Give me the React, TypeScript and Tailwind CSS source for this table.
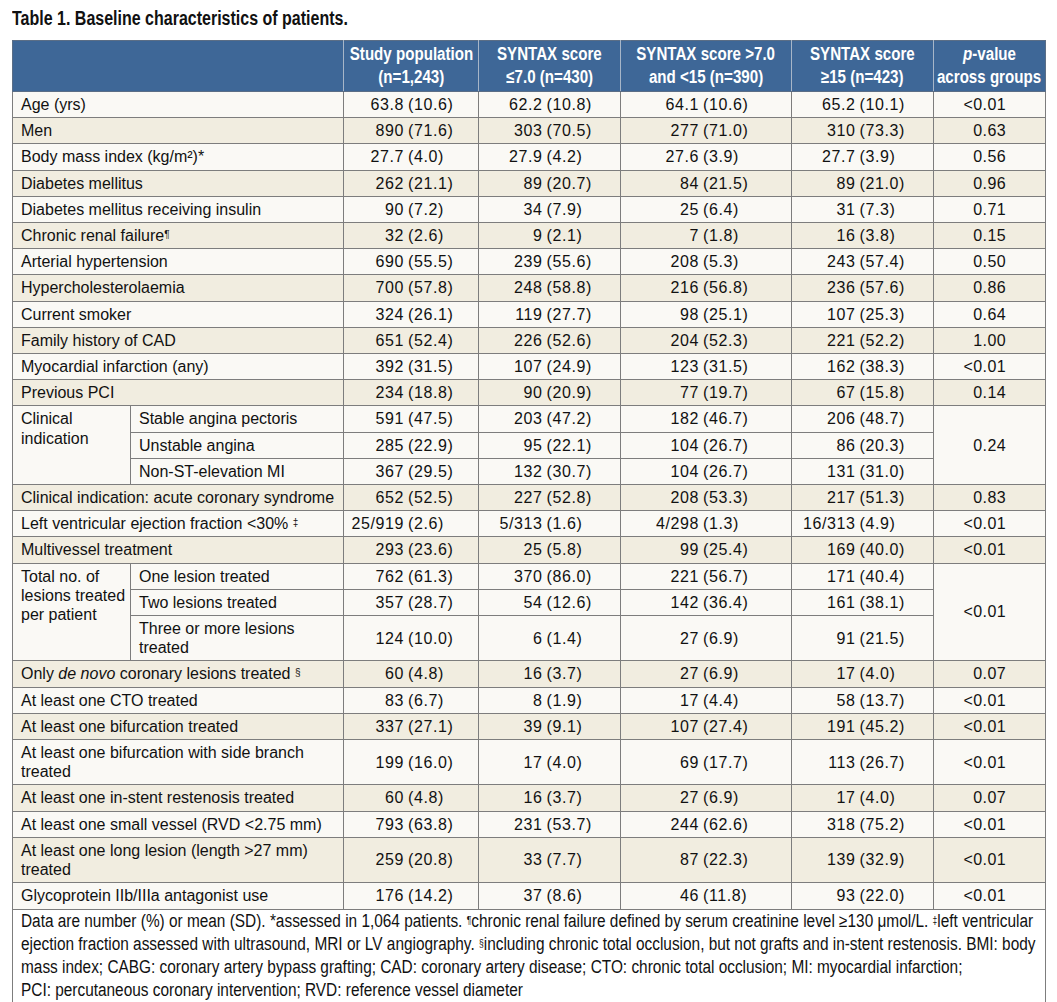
import React from "react";

type Single = {
  kind: "single";
  label: React.ReactNode;
  vals: string[];
  p: string;
  bg: string;
};
type Group = {
  kind: "group";
  label: React.ReactNode;
  subs: { label: React.ReactNode; vals: string[] }[];
  p: string;
  bg: string;
};

const L = "bg-[#faf9f5]";
const B = "bg-[#f1ede0]";

const Sup = ({ children }: { children: React.ReactNode }) => (
  <sup className="text-[10px] relative -top-[3px] align-baseline">{children}</sup>
);

const rows: (Single | Group)[] = [
  { kind: "single", label: "Age (yrs)", vals: ["63.8 (10.6)", "62.2 (10.8)", "64.1 (10.6)", "65.2 (10.1)"], p: "<0.01", bg: L },
  { kind: "single", label: "Men", vals: ["890 (71.6)", "303 (70.5)", "277 (71.0)", "310 (73.3)"], p: "0.63", bg: B },
  { kind: "single", label: <>Body mass index (kg/m²)*</>, vals: ["27.7 (4.0)", "27.9 (4.2)", "27.6 (3.9)", "27.7 (3.9)"], p: "0.56", bg: L },
  { kind: "single", label: "Diabetes mellitus", vals: ["262 (21.1)", "89 (20.7)", "84 (21.5)", "89 (21.0)"], p: "0.96", bg: B },
  { kind: "single", label: "Diabetes mellitus receiving insulin", vals: ["90 (7.2)", "34 (7.9)", "25 (6.4)", "31 (7.3)"], p: "0.71", bg: L },
  { kind: "single", label: <>Chronic renal failure<Sup>¶</Sup></>, vals: ["32 (2.6)", "9 (2.1)", "7 (1.8)", "16 (3.8)"], p: "0.15", bg: B },
  { kind: "single", label: "Arterial hypertension", vals: ["690 (55.5)", "239 (55.6)", "208 (5.3)", "243 (57.4)"], p: "0.50", bg: L },
  { kind: "single", label: "Hypercholesterolaemia", vals: ["700 (57.8)", "248 (58.8)", "216 (56.8)", "236 (57.6)"], p: "0.86", bg: B },
  { kind: "single", label: "Current smoker", vals: ["324 (26.1)", "119 (27.7)", "98 (25.1)", "107 (25.3)"], p: "0.64", bg: L },
  { kind: "single", label: "Family history of CAD", vals: ["651 (52.4)", "226 (52.6)", "204 (52.3)", "221 (52.2)"], p: "1.00", bg: B },
  { kind: "single", label: "Myocardial infarction (any)", vals: ["392 (31.5)", "107 (24.9)", "123 (31.5)", "162 (38.3)"], p: "<0.01", bg: L },
  { kind: "single", label: "Previous PCI", vals: ["234 (18.8)", "90 (20.9)", "77 (19.7)", "67 (15.8)"], p: "0.14", bg: B },
  {
    kind: "group",
    label: <>Clinical<br />indication</>,
    subs: [
      { label: "Stable angina pectoris", vals: ["591 (47.5)", "203 (47.2)", "182 (46.7)", "206 (48.7)"] },
      { label: "Unstable angina", vals: ["285 (22.9)", "95 (22.1)", "104 (26.7)", "86 (20.3)"] },
      { label: "Non-ST-elevation MI", vals: ["367 (29.5)", "132 (30.7)", "104 (26.7)", "131 (31.0)"] },
    ],
    p: "0.24",
    bg: L,
  },
  { kind: "single", label: "Clinical indication: acute coronary syndrome", vals: ["652 (52.5)", "227 (52.8)", "208 (53.3)", "217 (51.3)"], p: "0.83", bg: B },
  { kind: "single", label: <>Left ventricular ejection fraction &lt;30% <Sup>‡</Sup></>, vals: ["25/919 (2.6)", "5/313 (1.6)", "4/298 (1.3)", "16/313 (4.9)"], p: "<0.01", bg: L },
  { kind: "single", label: "Multivessel treatment", vals: ["293 (23.6)", "25 (5.8)", "99 (25.4)", "169 (40.0)"], p: "<0.01", bg: B },
  {
    kind: "group",
    label: <>Total no. of<br />lesions treated<br />per patient</>,
    subs: [
      { label: "One lesion treated", vals: ["762 (61.3)", "370 (86.0)", "221 (56.7)", "171 (40.4)"] },
      { label: "Two lesions treated", vals: ["357 (28.7)", "54 (12.6)", "142 (36.4)", "161 (38.1)"] },
      { label: <>Three or more lesions<br />treated</>, vals: ["124 (10.0)", "6 (1.4)", "27 (6.9)", "91 (21.5)"] },
    ],
    p: "<0.01",
    bg: L,
  },
  { kind: "single", label: <>Only <i>de novo</i> coronary lesions treated <Sup>§</Sup></>, vals: ["60 (4.8)", "16 (3.7)", "27 (6.9)", "17 (4.0)"], p: "0.07", bg: B },
  { kind: "single", label: "At least one CTO treated", vals: ["83 (6.7)", "8 (1.9)", "17 (4.4)", "58 (13.7)"], p: "<0.01", bg: L },
  { kind: "single", label: "At least one bifurcation treated", vals: ["337 (27.1)", "39 (9.1)", "107 (27.4)", "191 (45.2)"], p: "<0.01", bg: B },
  { kind: "single", label: <>At least one bifurcation with side branch<br />treated</>, vals: ["199 (16.0)", "17 (4.0)", "69 (17.7)", "113 (26.7)"], p: "<0.01", bg: L },
  { kind: "single", label: "At least one in-stent restenosis treated", vals: ["60 (4.8)", "16 (3.7)", "27 (6.9)", "17 (4.0)"], p: "0.07", bg: B },
  { kind: "single", label: "At least one small vessel (RVD <2.75 mm)", vals: ["793 (63.8)", "231 (53.7)", "244 (62.6)", "318 (75.2)"], p: "<0.01", bg: L },
  { kind: "single", label: <>At least one long lesion (length &gt;27 mm)<br />treated</>, vals: ["259 (20.8)", "33 (7.7)", "87 (22.3)", "139 (32.9)"], p: "<0.01", bg: B },
  { kind: "single", label: "Glycoprotein IIb/IIIa antagonist use", vals: ["176 (14.2)", "37 (8.6)", "46 (11.8)", "93 (22.0)"], p: "<0.01", bg: L },
];

const cellB = "border border-[#7d7d7d]";
const pad = "py-[3px] leading-[19.2px]";

function Num({ v }: { v: string }) {
  const i = v.indexOf(" (");
  const a = v.slice(0, i);
  const b = v.slice(i + 1);
  return (
    <div className="flex whitespace-nowrap tracking-[0.6px]">
      <span className="w-[calc(50%-3px)] text-right pr-[4px]">{a}</span>
      <span className="flex-1 text-left">{b}</span>
    </div>
  );
}

function PCell({ p, rowSpan }: { p: string; rowSpan?: number }) {
  return (
    <td rowSpan={rowSpan} className={`${cellB} ${pad} text-right pr-[39px] align-middle tracking-[0.4px]`}>
      {p}
    </td>
  );
}

function HeadCell({ l1, l2, cls }: { l1: React.ReactNode; l2: React.ReactNode; cls: string }) {
  return (
    <th className={`border border-[#5b6e86] ${cls} py-[2px] px-0 font-bold overflow-hidden`}>
      <div className="flex flex-col items-center">
        <span className="whitespace-nowrap scale-x-[0.84] origin-center">{l1}</span>
        <span className="whitespace-nowrap scale-x-[0.84] origin-center">{l2}</span>
      </div>
    </th>
  );
}

export default function App() {
  return (
    <div className="bg-white w-[1057px] min-h-[1002px] overflow-hidden text-[#111] font-['Liberation_Sans',Arial,sans-serif]">
      <div className="pl-[12px] pt-[6px] pb-[10px] overflow-hidden">
        <div className="font-bold text-[20px] leading-[24px] whitespace-nowrap scale-x-[0.8] origin-left">
          Table 1. Baseline characteristics of patients.
        </div>
      </div>
      <table className="ml-[12px] w-[1033px] table-fixed border-collapse text-[16px]">
        <colgroup>
          <col className="w-[118px]" />
          <col className="w-[213px]" />
          <col className="w-[135px]" />
          <col className="w-[142px]" />
          <col className="w-[171px]" />
          <col className="w-[142px]" />
          <col className="w-[112px]" />
        </colgroup>
        <thead>
          <tr className="bg-[#3e6797] text-white text-[18px] leading-[23px]">
            <th colSpan={2} className="border border-[#5b6e86] border-r-[#a7b6c8] py-[2px]"></th>
            <HeadCell cls="border-x-[#a7b6c8]" l1="Study population" l2="(n=1,243)" />
            <HeadCell cls="border-x-[#a7b6c8]" l1="SYNTAX score" l2="≤7.0 (n=430)" />
            <HeadCell cls="border-x-[#a7b6c8]" l1="SYNTAX score >7.0" l2="and <15 (n=390)" />
            <HeadCell cls="border-x-[#a7b6c8]" l1="SYNTAX score" l2="≥15 (n=423)" />
            <HeadCell cls="border-l-[#a7b6c8]" l1={<><i>p</i>-value</>} l2="across groups" />
          </tr>
        </thead>
        <tbody>
          {rows.map((r, idx) => {
            if (r.kind === "single") {
              return (
                <tr key={idx} className={r.bg}>
                  <td colSpan={2} className={`${cellB} ${pad} px-[8px] whitespace-nowrap`}>{r.label}</td>
                  {r.vals.map((v, j) => (
                    <td key={j} className={`${cellB} ${pad} px-0 align-middle`}>
                      <Num v={v} />
                    </td>
                  ))}
                  <PCell p={r.p} />
                </tr>
              );
            }
            return (
              <React.Fragment key={idx}>
                {r.subs.map((s, si) => (
                  <tr key={si} className={r.bg}>
                    {si === 0 && (
                      <td rowSpan={r.subs.length} className={`${cellB} ${pad} px-[8px] align-top whitespace-nowrap`}>
                        {r.label}
                      </td>
                    )}
                    <td className={`${cellB} ${pad} px-[8px] whitespace-nowrap`}>{s.label}</td>
                    {s.vals.map((v, j) => (
                      <td key={j} className={`${cellB} ${pad} px-0 align-middle`}>
                        <Num v={v} />
                      </td>
                    ))}
                    {si === 0 && <PCell p={r.p} rowSpan={r.subs.length} />}
                  </tr>
                ))}
              </React.Fragment>
            );
          })}
          <tr className="bg-white">
            <td colSpan={7} className={`${cellB} px-[8px] pt-0 pb-[1px]`}>
              <div className="overflow-hidden">
                <div className="text-[18px] leading-[23px] whitespace-nowrap scale-x-[0.855] origin-left w-max">
                  Data are number (%) or mean (SD). *assessed in 1,064 patients. <Sup>¶</Sup>chronic renal failure defined by serum creatinine level ≥130 μmol/L. <Sup>‡</Sup>left ventricular
                  <br />
                  ejection fraction assessed with ultrasound, MRI or LV angiography. <Sup>§</Sup>including chronic total occlusion, but not grafts and in-stent restenosis. BMI: body
                  <br />
                  mass index; CABG: coronary artery bypass grafting; CAD: coronary artery disease; CTO: chronic total occlusion; MI: myocardial infarction;
                  <br />
                  PCI: percutaneous coronary intervention; RVD: reference vessel diameter
                </div>
              </div>
            </td>
          </tr>
        </tbody>
      </table>
    </div>
  );
}
